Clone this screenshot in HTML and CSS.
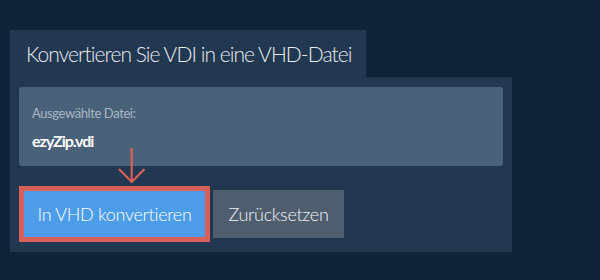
FILE: index.html
```html
<!DOCTYPE html>
<html lang="de">
<head>
<meta charset="utf-8">
<link rel="stylesheet" href="styles.css">
</head>
<body>
<div class="wrap">
  <div class="tab">Konvertieren Sie VDI in eine VHD-Datei</div>
  <div class="panel">
    <div class="filebox">
      <div class="label">Ausgewählte Datei:</div>
      <div class="filename">ezyZip.vdi</div>
    </div>
    <div class="actions">
      <svg class="arrow" width="30" height="38" viewBox="0 0 30 38">
        <path d="M14.7 1 V35 M2 22 L14.7 35 L27.5 22" fill="none" stroke="#d9605a" stroke-width="2.2"/>
      </svg>
      <button class="btn primary">In VHD konvertieren</button>
      <button class="btn reset">Zurücksetzen</button>
    </div>
  </div>
</div>
</body>
</html>
```
FILE: styles.css
```css
html, body {
  margin: 0;
  padding: 0;
  background: #0f2339;
  width: 600px;
  height: 280px;
  overflow: hidden;
  font-family: Lato, "Open Sans", sans-serif;
}
.wrap {
  padding: 30px 0 0 10px;
}
.tab {
  display: inline-block;
  box-sizing: border-box;
  width: 356px;
  height: 47px;
  background: #223750;
  color: #e8edf2;
  font-size: 21px;
  font-weight: 300;
  letter-spacing: -0.95px;
  line-height: 47px;
  padding-left: 16px;
  white-space: nowrap;
  vertical-align: top;
}
.panel {
  width: 502px;
  box-sizing: border-box;
  background: #223750;
  padding: 10px 9px 10px 9px;
}
.filebox {
  height: 79px;
  box-sizing: border-box;
  background: #4a617a;
  border-radius: 3px;
  padding: 17px 13px 0 13px;
}
.label {
  color: #aab6c3;
  font-size: 13px;
  letter-spacing: -0.4px;
  line-height: 18px;
}
.filename {
  color: #ffffff;
  font-weight: bold;
  font-size: 16px;
  letter-spacing: -1px;
  line-height: 20px;
  margin-top: 9px;
}
.actions {
  position: relative;
  display: flex;
  align-items: center;
  gap: 3px;
  margin-top: 20px;
}
.arrow {
  position: absolute;
  left: 98px;
  top: -39px;
}
.btn {
  font-family: Lato, "Open Sans", sans-serif;
  font-size: 18px;
  font-weight: 300;
  letter-spacing: -0.3px;
  color: #ffffff;
  border: none;
  margin: 0;
  cursor: pointer;
  box-sizing: border-box;
}
.primary {
  width: 191px;
  height: 56px;
  background: #4c9ce8;
  border: 5px solid #d95f5b;
  padding: 0;
}
.reset {
  width: 131px;
  height: 48px;
  background: #4e5e6f;
  padding: 0;
  color: #f0f3f6;
}
```
